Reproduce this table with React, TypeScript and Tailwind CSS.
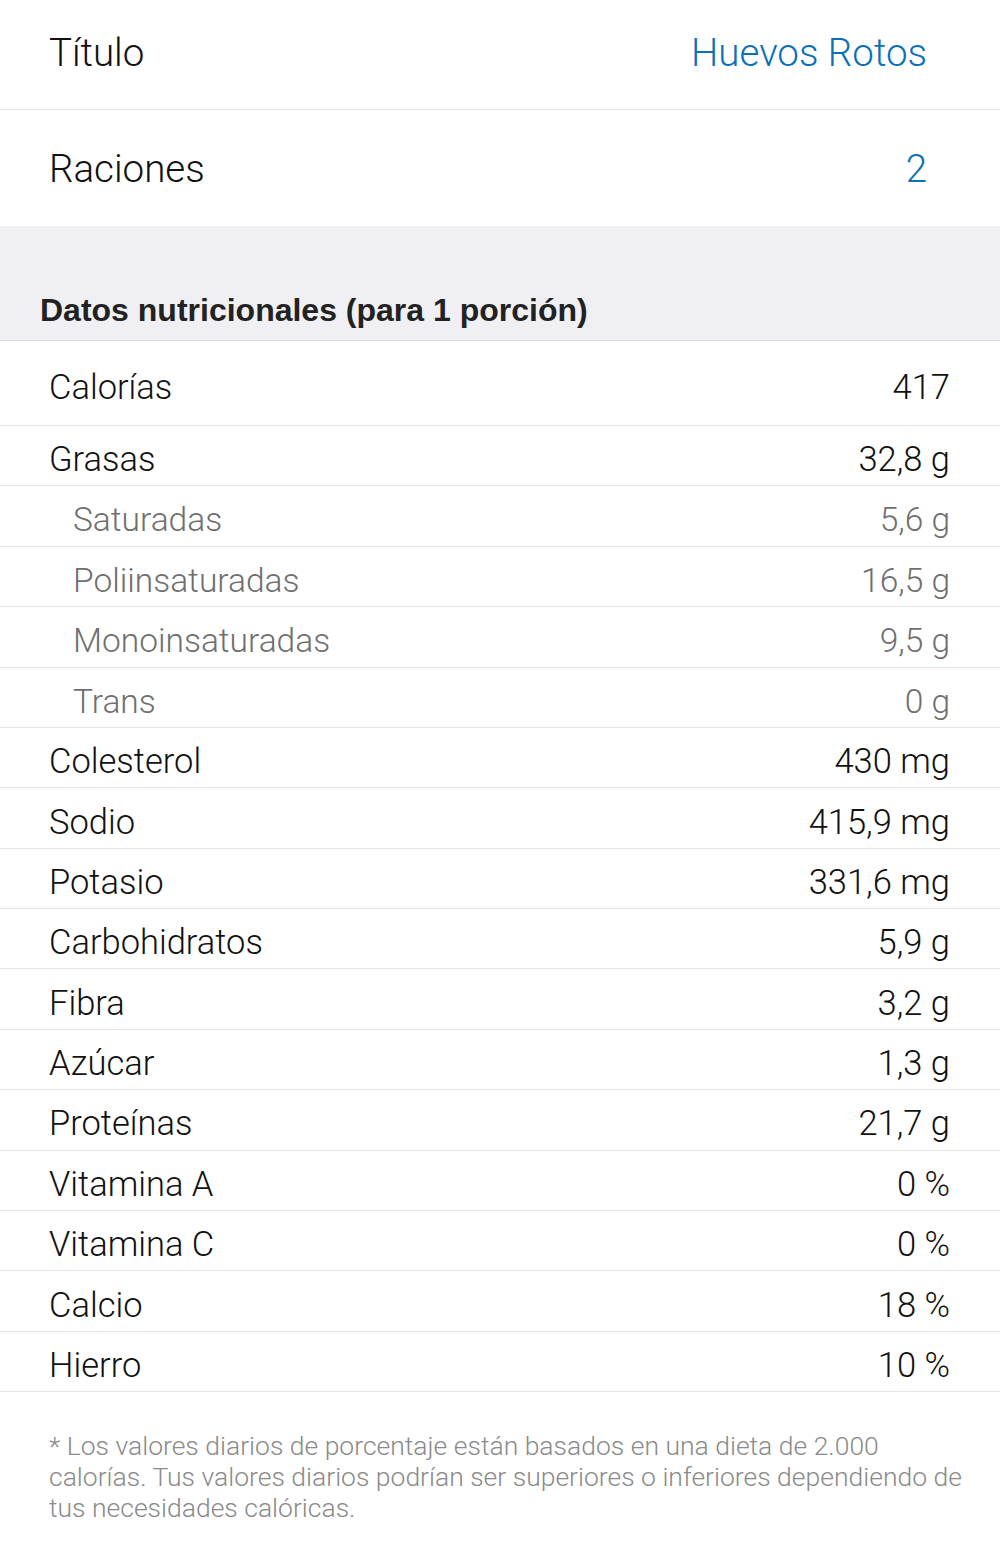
const rows: { label: string; value: string; sub?: boolean }[] = [
  { label: 'Grasas', value: '32,8 g' },
  { label: 'Saturadas', value: '5,6 g', sub: true },
  { label: 'Poliinsaturadas', value: '16,5 g', sub: true },
  { label: 'Monoinsaturadas', value: '9,5 g', sub: true },
  { label: 'Trans', value: '0 g', sub: true },
  { label: 'Colesterol', value: '430 mg' },
  { label: 'Sodio', value: '415,9 mg' },
  { label: 'Potasio', value: '331,6 mg' },
  { label: 'Carbohidratos', value: '5,9 g' },
  { label: 'Fibra', value: '3,2 g' },
  { label: 'Azúcar', value: '1,3 g' },
  { label: 'Proteínas', value: '21,7 g' },
  { label: 'Vitamina A', value: '0 %' },
  { label: 'Vitamina C', value: '0 %' },
  { label: 'Calcio', value: '18 %' },
  { label: 'Hierro', value: '10 %' },
];

export default function App() {
  return (
    <div className="w-[1000px] min-h-[1556px] bg-white font-['Roboto',sans-serif] font-light text-[#111]">
      {/* Recipe fields */}
      <div className="flex h-[110px] items-center justify-between border-b border-[#e6e6e8] pl-[49px] pr-[73px] pb-[4px]">
        <span className="text-[38.5px]">Título</span>
        <span className="text-[38.5px] text-[#0b70b8]">Huevos Rotos</span>
      </div>
      <div className="flex h-[116px] items-center justify-between pl-[49px] pr-[73px] pt-[2px]">
        <span className="text-[38.5px]">Raciones</span>
        <span className="text-[38.5px] text-[#0b70b8]">2</span>
      </div>

      {/* Section header */}
      <div className="flex h-[115px] items-end border-b border-[#dedee2] bg-[#efeff4] pb-[6px] pl-[40px]">
        <span className="font-['Liberation_Sans',sans-serif] text-[32px] font-bold text-[#222]">
          Datos nutricionales (para 1 porción)
        </span>
      </div>

      {/* Nutrition rows */}
      <div className="flex h-[85px] items-center justify-between border-b border-[#e6e6e8] pl-[49px] pr-[50px] pt-[10px] text-[34.5px]">
        <span>Calorías</span>
        <span>417</span>
      </div>
      {rows.map((r) => (
        <div
          key={r.label}
          className={`flex h-[60.375px] items-center justify-between border-b border-[#e6e6e8] pr-[50px] pt-[9px] ${
            r.sub ? 'pl-[73px] text-[33.5px] text-[#6f6f6f]' : 'pl-[49px] text-[34.5px]'
          }`}
        >
          <span>{r.label}</span>
          <span>{r.value}</span>
        </div>
      ))}

      {/* Footnote */}
      <p className="pl-[49px] pr-[36px] pt-[38px] text-[26.5px] leading-[31px] text-[#8a8a8a]">
        * Los valores diarios de porcentaje están basados en una dieta de 2.000 calorías. Tus valores diarios podrían ser superiores o inferiores dependiendo de tus necesidades calóricas.
      </p>
    </div>
  );
}
